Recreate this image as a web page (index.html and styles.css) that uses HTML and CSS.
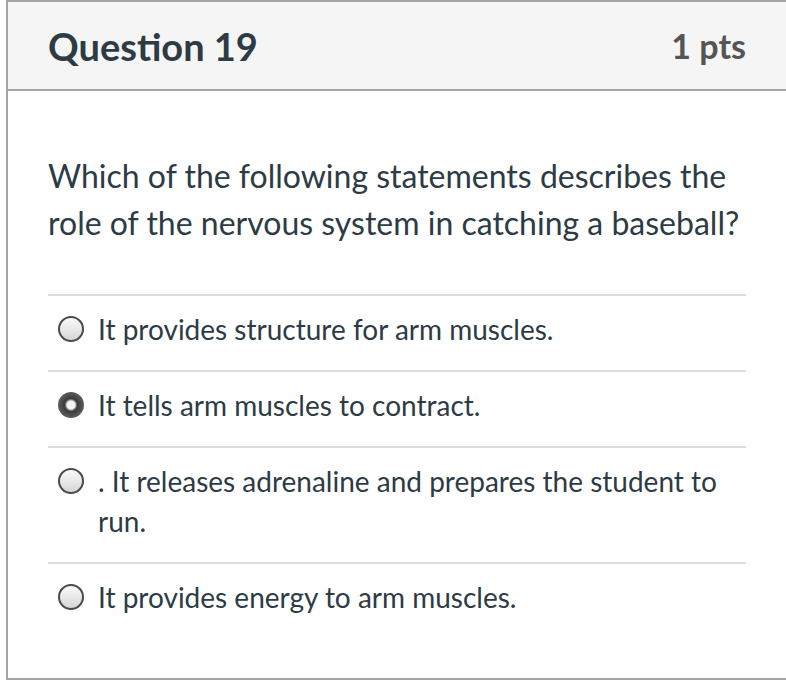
FILE: index.html
```html
<!DOCTYPE html>
<html>
<head>
<meta charset="utf-8">
<link rel="stylesheet" href="styles.css">
</head>
<body>
<div class="question">
  <div class="q-header">
    <h2 class="q-title">Question 19</h2>
    <span class="q-points">1 pts</span>
  </div>
  <div class="q-body">
    <p class="q-text">Which of the following statements describes the role of the nervous system in catching a baseball?</p>
    <div class="answers">
      <div class="answer">
        <span class="radio"></span>
        <span class="answer-text">It provides structure for arm muscles.</span>
      </div>
      <div class="answer">
        <span class="radio checked"></span>
        <span class="answer-text">It tells arm muscles to contract.</span>
      </div>
      <div class="answer">
        <span class="radio"></span>
        <span class="answer-text">. It releases adrenaline and prepares the student to run.</span>
      </div>
      <div class="answer">
        <span class="radio"></span>
        <span class="answer-text">It provides energy to arm muscles.</span>
      </div>
    </div>
  </div>
</div>
</body>
</html>
```
FILE: styles.css
```css
html, body {
  margin: 0;
  padding: 0;
  background: #fff;
  overflow: hidden;
}
body {
  font-family: Lato, "Open Sans", sans-serif;
  color: #2d3b45;
}
.question {
  margin-left: 6px;
  width: 778px;
  border-left: 2px solid #a5a5a5;
  border-top: 2px solid #a5a5a5;
  border-bottom: 2px solid #a5a5a5;
}
.q-header {
  height: 87px;
  background: #f5f5f5;
  border-bottom: 2px solid #a5a5a5;
  padding: 0 40px;
  display: flex;
  align-items: center;
  justify-content: space-between;
}
.q-title {
  margin: 0;
  font-size: 38px;
  font-weight: 700;
  color: #2d3b45;
}
.q-points {
  font-size: 34px;
  font-weight: 700;
  color: #555;
}
.q-body {
  padding: 61px 40px 40px;
}
.q-text {
  margin: 0 0 48px;
  font-size: 32px;
  line-height: 47px;
}
.answer {
  display: flex;
  align-items: flex-start;
  border-top: 2px solid #ddd;
  padding: 13px 0 21px;
}
.radio {
  flex: none;
  box-sizing: border-box;
  width: 26px;
  height: 26px;
  margin: 7px 14px 0 10px;
  border-radius: 50%;
  border: 2px solid #4a4a4a;
  background: linear-gradient(#fbfbfb, #d6d6d6);
}
.radio.checked {
  border: none;
  background: radial-gradient(circle, #f4f4f4 0 4px, #9a9a9a 5px, #3a3a3a 6.5px, #5e5e5e 13px);
}
.answer-text {
  font-size: 28px;
  line-height: 40px;
}
```
